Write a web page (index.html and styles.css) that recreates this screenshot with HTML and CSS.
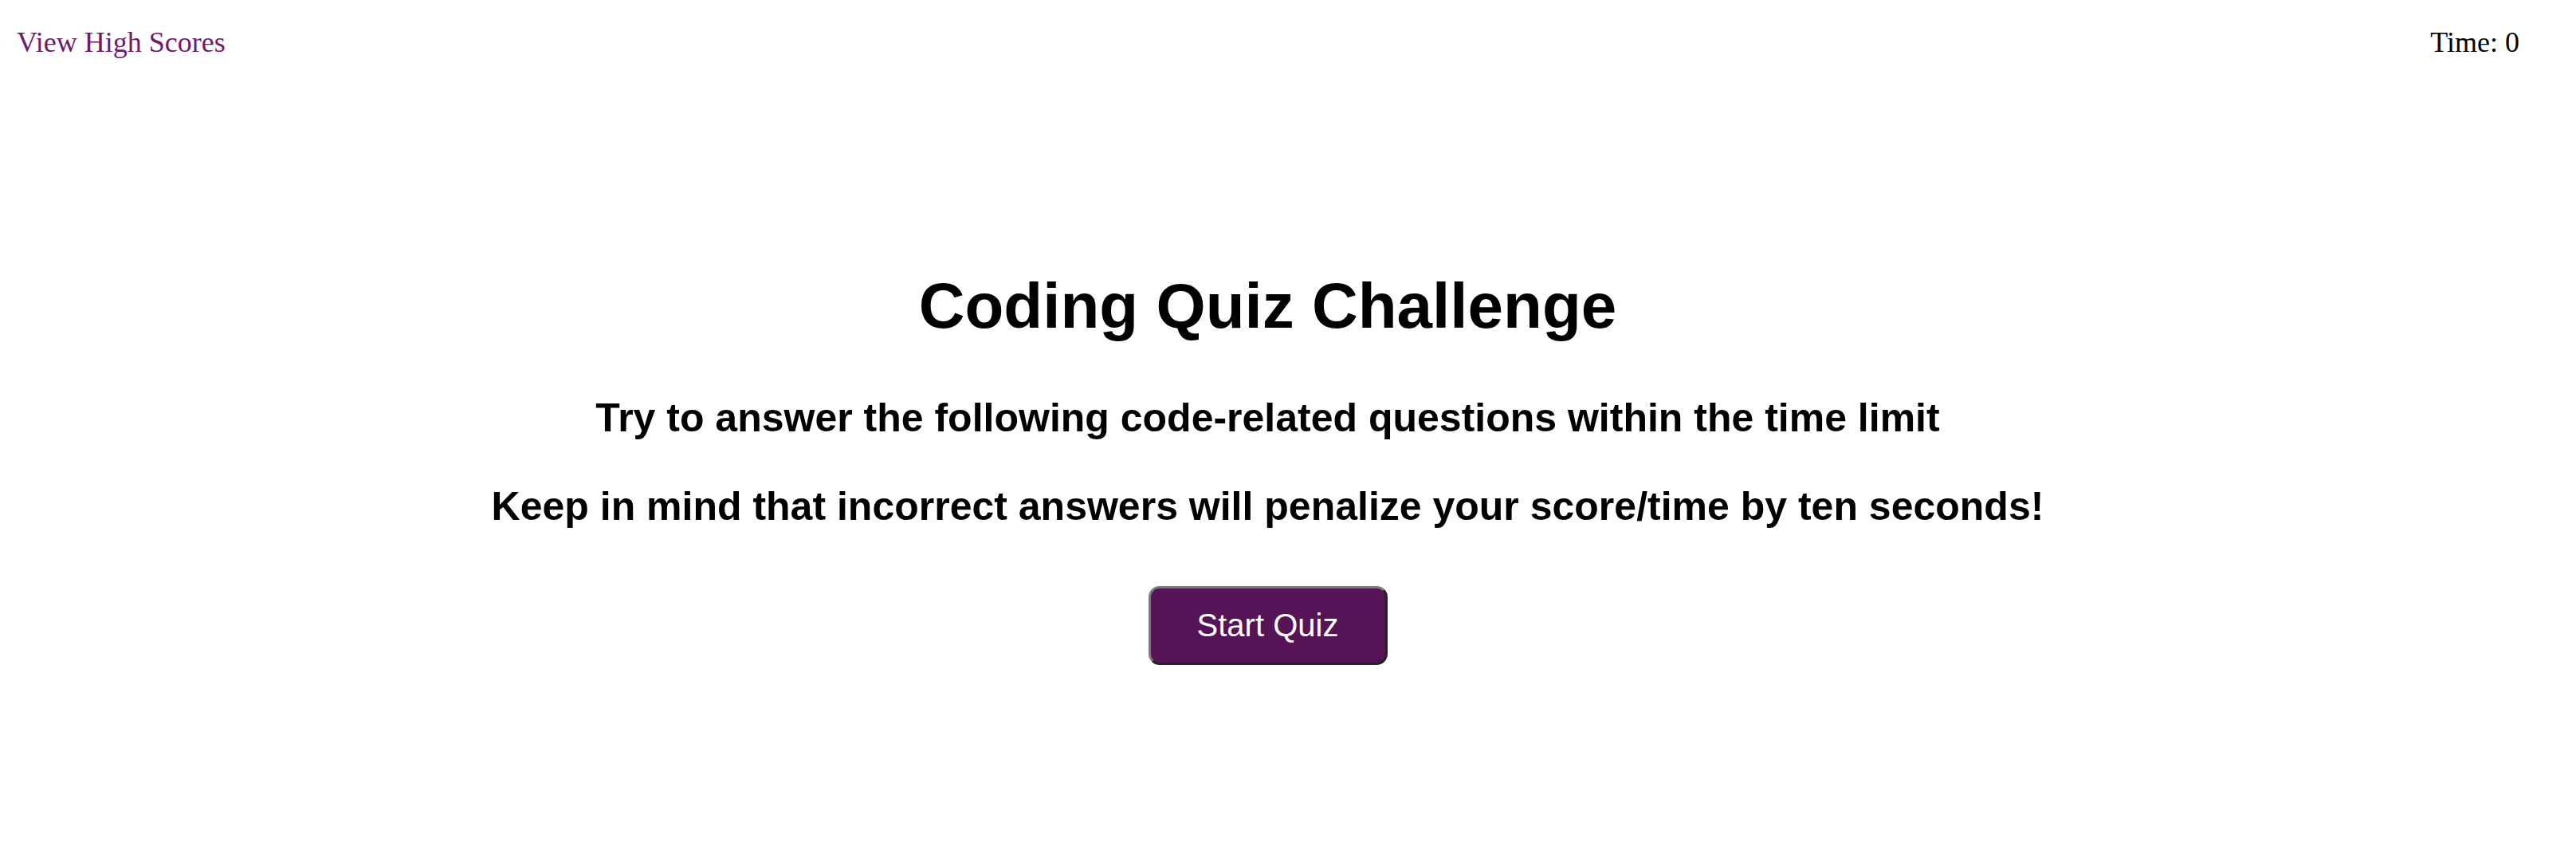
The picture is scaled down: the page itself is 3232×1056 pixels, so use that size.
FILE: index.html
```html
<!DOCTYPE html>
<html lang="en">
<head>
<meta charset="utf-8">
<title>Coding Quiz Challenge</title>
<link rel="stylesheet" href="styles.css">
</head>
<body>
<header class="topbar">
  <a class="scores-link" href="#">View High Scores</a>
  <span class="timer">Time: 0</span>
</header>
<main class="intro">
  <h1 class="intro-title">Coding Quiz Challenge</h1>
  <p class="intro-text first">Try to answer the following code-related questions within the time limit</p>
  <p class="intro-text second">Keep in mind that incorrect answers will penalize your score/time by ten seconds!</p>
  <button class="start-btn" type="button">Start Quiz</button>
</main>
</body>
</html>
```
FILE: styles.css
```css
html, body {
  margin: 0;
  padding: 0;
  background: #ffffff;
}

.topbar {
  display: flex;
  justify-content: space-between;
  align-items: flex-start;
  padding: 32px 71px 0 21px;
  font-family: "Liberation Serif", "Times New Roman", serif;
  font-size: 36px;
  line-height: normal;
}

.scores-link {
  color: #6d1b6f;
  text-decoration: none;
}

.timer {
  color: #000000;
}

.intro {
  display: flex;
  flex-direction: column;
  align-items: center;
  text-align: center;
  margin-top: 264px;
  padding-right: 51px;
  font-family: "Liberation Sans", Arial, sans-serif;
  color: #000000;
}

.intro-title {
  margin: 0;
  font-size: 80px;
  font-weight: bold;
  line-height: normal;
}

.intro-text {
  margin: 0;
  font-size: 50px;
  font-weight: bold;
  line-height: normal;
}

.intro-text.first {
  margin-top: 65px;
}

.intro-text.second {
  margin-top: 53px;
}

.start-btn {
  margin-top: 71px;
  box-sizing: border-box;
  width: 300px;
  height: 99px;
  padding: 0;
  background: #561456;
  color: #ffffff;
  font-family: "Liberation Sans", Arial, sans-serif;
  font-size: 40px;
  border-width: 3px;
  border-style: solid;
  border-color: #7a7a7a #222222 #222222 #7a7a7a;
  border-radius: 14px;
  cursor: pointer;
}
```
